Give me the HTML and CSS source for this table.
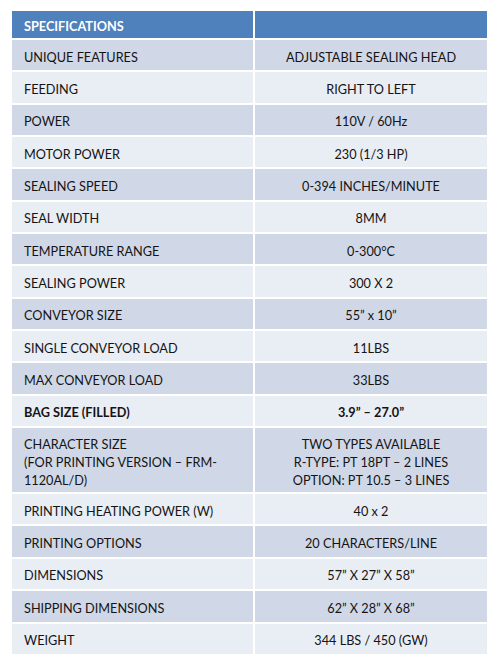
FILE: index.html
```html
<!DOCTYPE html>
<html>
<head>
<meta charset="utf-8">
<link rel="stylesheet" href="styles.css">
</head>
<body>
<table class="spec">
  <colgroup><col class="c-label"><col class="c-value"></colgroup>
  <thead>
    <tr class="head"><th>SPECIFICATIONS</th><th></th></tr>
  </thead>
  <tbody>
    <tr class="dark"><td>UNIQUE FEATURES</td><td>ADJUSTABLE SEALING HEAD</td></tr>
    <tr class="light"><td>FEEDING</td><td>RIGHT TO LEFT</td></tr>
    <tr class="dark"><td>POWER</td><td>110V / 60Hz</td></tr>
    <tr class="light"><td>MOTOR POWER</td><td>230 (1/3 HP)</td></tr>
    <tr class="dark"><td>SEALING SPEED</td><td>0-394 INCHES/MINUTE</td></tr>
    <tr class="light"><td>SEAL WIDTH</td><td>8MM</td></tr>
    <tr class="dark"><td>TEMPERATURE RANGE</td><td>0-300°C</td></tr>
    <tr class="light"><td>SEALING POWER</td><td>300 X 2</td></tr>
    <tr class="dark"><td>CONVEYOR SIZE</td><td>55” x 10”</td></tr>
    <tr class="light"><td>SINGLE CONVEYOR LOAD</td><td>11LBS</td></tr>
    <tr class="dark"><td>MAX CONVEYOR LOAD</td><td>33LBS</td></tr>
    <tr class="light bold"><td>BAG SIZE (FILLED)</td><td>3.9” – 27.0”</td></tr>
    <tr class="dark tall"><td>CHARACTER SIZE<br>(FOR PRINTING VERSION – FRM-<br>1120AL/D)</td><td>TWO TYPES AVAILABLE<br>R-TYPE: PT 18PT – 2 LINES<br>OPTION: PT 10.5 – 3 LINES</td></tr>
    <tr class="light"><td>PRINTING HEATING POWER (W)</td><td>40 x 2</td></tr>
    <tr class="dark"><td>PRINTING OPTIONS</td><td>20 CHARACTERS/LINE</td></tr>
    <tr class="light"><td>DIMENSIONS</td><td>57” X 27” X 58”</td></tr>
    <tr class="dark"><td>SHIPPING DIMENSIONS</td><td>62” X 28” X 68”</td></tr>
    <tr class="light"><td>WEIGHT</td><td>344 LBS / 450 (GW)</td></tr>
  </tbody>
</table>
</body>
</html>
```
FILE: styles.css
```css
html, body {
  margin: 0;
  padding: 0;
  background: #ffffff;
}
body {
  padding: 9px 0 0 10px;
  font-family: Lato, "Open Sans", sans-serif;
  font-size: 12.7px;
  color: #141414;
}
.spec {
  border-collapse: separate;
  border-spacing: 2px;
  table-layout: fixed;
  width: 479px;
}
.c-label { width: 241px; }
.c-value { width: 232px; }
.spec th {
  background: #4f81bd;
  color: #ffffff;
  font-weight: bold;
  text-align: left;
  height: 27px;
  padding: 3px 0 0 12px;
  box-sizing: border-box;
}
.spec td {
  height: 30.35px;
  padding: 3px 0 0 12px;
  box-sizing: border-box;
  line-height: 18px;
  vertical-align: middle;
}
.spec td + td {
  text-align: center;
  padding: 3px 0 0 0;
}
.dark td { background: #d0d8e8; }
.light td { background: #e9edf4; }
.bold td { font-weight: bold; }
.tall td { height: 64px; }
```
